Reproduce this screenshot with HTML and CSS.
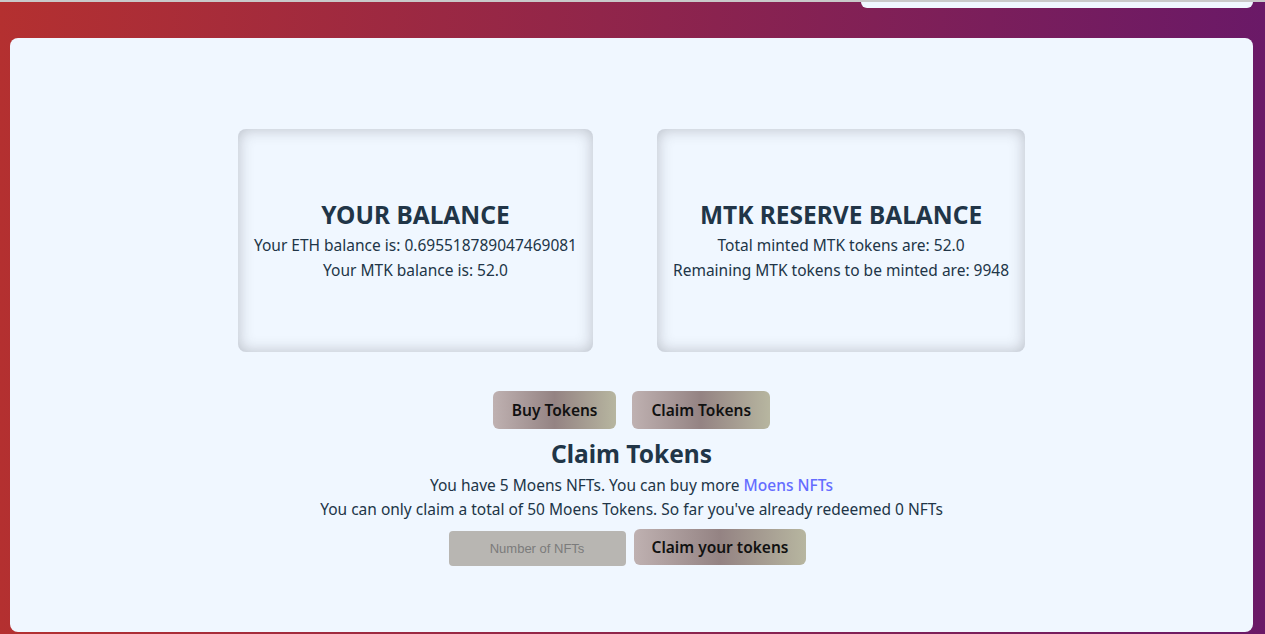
FILE: index.html
```html
<!DOCTYPE html>
<html lang="en">
<head>
<meta charset="utf-8">
<title>MTK Tokens</title>
<link rel="stylesheet" href="styles.css">
</head>
<body>
<div class="page">
  <header class="topbar">
    <div class="topbar-tab"></div>
  </header>
  <main class="panel">
    <section class="cards">
      <div class="card">
        <h2 class="card-title">YOUR BALANCE</h2>
        <p class="card-line">Your ETH balance is: 0.695518789047469081</p>
        <p class="card-line">Your MTK balance is: 52.0</p>
      </div>
      <div class="card">
        <h2 class="card-title">MTK RESERVE BALANCE</h2>
        <p class="card-line">Total minted MTK tokens are: 52.0</p>
        <p class="card-line">Remaining MTK tokens to be minted are: 9948</p>
      </div>
    </section>
    <nav class="tabs">
      <button class="btn">Buy Tokens</button>
      <button class="btn">Claim Tokens</button>
    </nav>
    <section class="claim">
      <h2 class="claim-title">Claim Tokens</h2>
      <p class="claim-line">You have 5 Moens NFTs. You can buy more <a class="link" href="#">Moens NFTs</a></p>
      <p class="claim-line">You can only claim a total of 50 Moens Tokens. So far you've already redeemed 0 NFTs</p>
      <form class="claim-form">
        <input class="nft-input" type="text" placeholder="Number of NFTs">
        <button class="btn btn-claim" type="button">Claim your tokens</button>
      </form>
    </section>
  </main>
</div>
</body>
</html>
```
FILE: styles.css
```css
* { box-sizing: border-box; }
html, body { margin: 0; padding: 0; height: 100%; }
body {
  font-family: "Noto Sans", "Open Sans", sans-serif;
  color: #213547;
  background: linear-gradient(to right, #b43030, #6a1967);
  overflow: hidden;
}
.page {
  display: flex;
  flex-direction: column;
  height: 634px;
  border-top: 2px solid #c9c9c9;
  padding: 0 12px 2px 10px;
}
.topbar {
  display: flex;
  justify-content: flex-end;
  height: 36px;
}
.topbar-tab {
  width: 392px;
  height: 6px;
  background: #f0f7ff;
  border-radius: 0 0 6px 6px;
}
.panel {
  flex: 1;
  background: #f0f7ff;
  border-radius: 8px;
  display: flex;
  flex-direction: column;
  align-items: center;
  padding-top: 91px;
}
.cards {
  display: flex;
  gap: 64px;
}
.card {
  border-radius: 8px;
  box-shadow: inset 0 0 15px rgba(60, 60, 70, 0.3);
  padding: 72px 16px 69px;
  text-align: center;
}
.card-title {
  margin: 0;
  font-size: 24.5px;
  line-height: 28px;
  font-weight: 700;
}
.card-line {
  margin: 0;
  font-size: 15.5px;
  line-height: 25px;
}
.card-line:first-of-type { margin-top: 4px; }
.tabs {
  display: flex;
  gap: 16px;
  margin-top: 39px;
}
.btn {
  font-family: inherit;
  font-size: 15.5px;
  font-weight: 600;
  color: #111;
  height: 38px;
  padding: 0 19px;
  border: none;
  border-radius: 6px;
  background: linear-gradient(to right, #bfb1b1, #948383 50%, #b7b6a0);
  cursor: pointer;
}
.claim {
  display: flex;
  flex-direction: column;
  align-items: center;
  text-align: center;
}
.claim-title {
  margin: 8px 0 0;
  font-size: 24.5px;
  line-height: 34px;
  font-weight: 700;
}
.claim-line {
  margin: 0;
  font-size: 15.5px;
  line-height: 24px;
}
.claim-line:first-of-type { margin-top: 2px; }
.link {
  color: #646cff;
  font-weight: 500;
  text-decoration: none;
}
.claim-form {
  display: flex;
  gap: 8px;
  margin-top: 8px;
  padding-right: 8px;
  align-items: flex-start;
}
.nft-input {
  width: 177px;
  height: 35px;
  margin-top: 2px;
  border: none;
  border-radius: 4px;
  background: #b8b6b2;
  text-align: center;
  font-family: "Liberation Sans", Arial, sans-serif;
  font-size: 13px;
}
.nft-input::placeholder { color: #7b7b7b; }
.btn-claim { height: 36px; padding: 0 18px; }
```
